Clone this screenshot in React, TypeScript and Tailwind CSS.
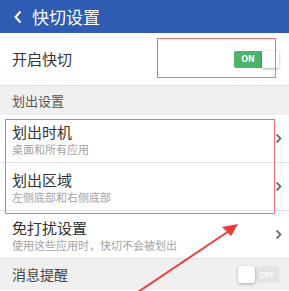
import React from "react";

const font = { fontFamily: '"Noto Sans CJK SC", "Noto Sans", sans-serif' };

const Chevron: React.FC = () => (
  <svg width="7" height="11" viewBox="0 0 7 11" className="shrink-0">
    <path d="M1.5 1.5 L5.5 5.5 L1.5 9.5" stroke="#555" strokeWidth="1.6" fill="none" />
  </svg>
);

const Row: React.FC<{ title: string; sub: string; border?: boolean }> = ({ title, sub, border }) => (
  <div className={`flex h-[48px] items-center bg-white pl-3 pr-[7px] ${border ? "border-b border-[#e2e2e2]" : ""}`}>
    <div className="flex flex-1 flex-col pt-[2px]">
      <span className="text-[15px] leading-[19px] text-[#333]">{title}</span>
      <span className="text-[11px] leading-[16px] text-[#a3a3a3]">{sub}</span>
    </div>
    <Chevron />
  </div>
);

const App: React.FC = () => {
  return (
    <div className="relative h-[291px] w-[289px] overflow-hidden bg-white" style={font}>
      {/* header */}
      <div className="flex h-[33px] items-center bg-[#2e5cb3] pl-[13px]">
        <svg width="10" height="14" viewBox="0 0 10 14">
          <path d="M7.5 1.5 L2.5 7 L7.5 12.5" stroke="#fff" strokeWidth="2" fill="none" />
        </svg>
        <span className="ml-[9px] text-[17px] text-white">快切设置</span>
      </div>

      {/* 开启快切 */}
      <div className="flex h-[53px] items-center border-b border-[#e2e2e2] bg-white pl-3 pr-[10px]">
        <span className="flex-1 text-[15px] text-[#333]">开启快切</span>
        <div className="flex h-[17px] w-[45px] rounded-[2px]">
          <div className="flex w-[28px] items-center justify-center rounded-l-[2px] bg-[#4cb36b] text-[9px] font-bold text-white">ON</div>
          <div className="w-[17px] rounded-[2px] bg-white shadow-[0_1px_3px_rgba(0,0,0,0.35)]" />
        </div>
      </div>

      {/* 划出设置 */}
      <div className="flex h-[29px] items-center bg-[#f0f0f0] pl-3 text-[13px] text-[#555]">划出设置</div>

      <Row title="划出时机" sub="桌面和所有应用" border />
      <Row title="划出区域" sub="左侧底部和右侧底部" border />
      <Row title="免打扰设置" sub="使用这些应用时，快切不会被划出" border />

      {/* 消息提醒 */}
      <div className="flex h-[31px] items-center bg-[#f0f0f0] pl-3 pr-[10px]">
        <span className="flex-1 text-[14px] text-[#444]">消息提醒</span>
        <div className="flex h-[17px] w-[41px] rounded-[2px] bg-[#e4e4e4]">
          <div className="w-[17px] rounded-[2px] bg-white shadow-[0_1px_3px_rgba(0,0,0,0.3)]" />
          <div className="flex flex-1 items-center justify-center text-[8px] font-bold text-[#fafafa]">OFF</div>
        </div>
      </div>

      {/* annotations */}
      <div className="absolute left-[157px] top-[38px] h-[40px] w-[119px] border border-[#ff6b6b]" />
      <div className="absolute left-[5px] top-[119px] h-[95px] w-[270px] border border-[#ff6b6b]" />
      <svg className="absolute left-0 top-0" width="289" height="291" viewBox="0 0 289 291">
        <path d="M138 292 L229 231" stroke="#f03c3c" strokeWidth="2" fill="none" />
        <path d="M238 224 L222 227 L231 236 Z" fill="#f03c3c" />
      </svg>
    </div>
  );
};

export default App;
